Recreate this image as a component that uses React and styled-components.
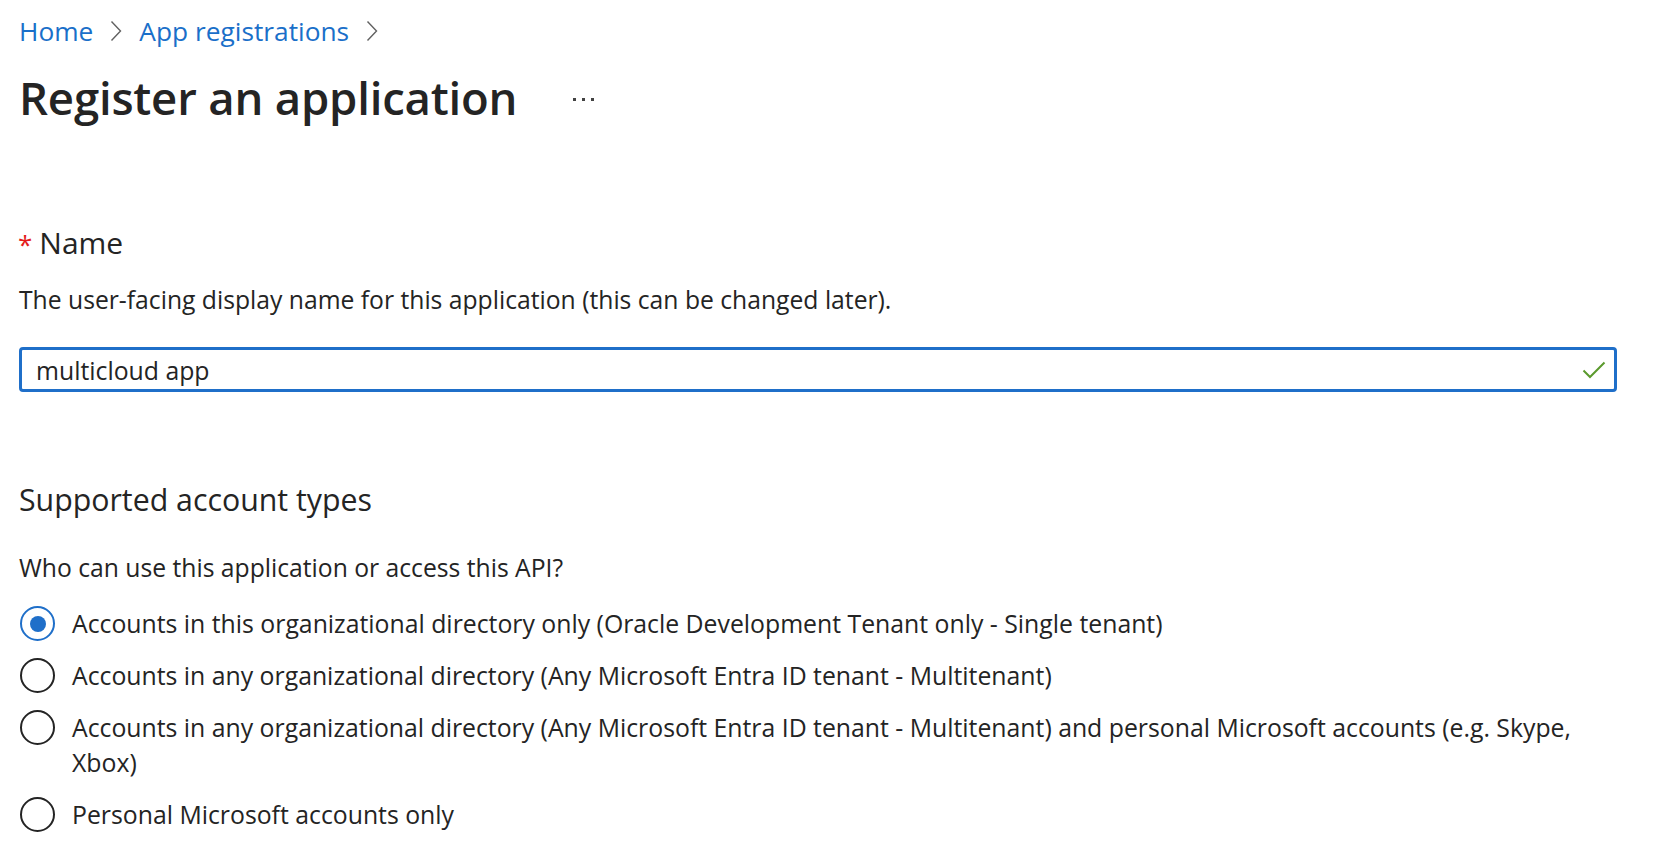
import React, { useState } from 'react';
import styled, { createGlobalStyle } from 'styled-components';

const GlobalStyle = createGlobalStyle`
  html, body {
    margin: 0;
    padding: 0;
    background: #ffffff;
  }
  body {
    font-family: "Open Sans", "Noto Sans", sans-serif;
    color: #242424;
  }
`;

const Page = styled.div`
  padding: 13px 45px 0 19px;
`;

const Breadcrumb = styled.nav`
  display: flex;
  align-items: center;
  height: 36px;
  font-size: 26.3px;
`;

const Crumb = styled.a`
  color: #1a6fc9;
  text-decoration: none;
  cursor: pointer;
`;

const Chevron = styled.span`
  display: inline-flex;
  width: 12px;
  margin: 0 17px 0 17px;
  color: #616161;
`;

const TitleRow = styled.div`
  display: flex;
  align-items: center;
  margin-top: 20px;
  height: 56px;
`;

const Title = styled.h1`
  margin: 0;
  font-size: 45.5px;
  font-weight: 600;
  color: #242424;
  letter-spacing: -0.2px;
`;

const More = styled.button`
  display: flex;
  gap: 6px;
  margin-left: 56px;
  margin-top: 4px;
  padding: 0;
  border: none;
  background: none;
  cursor: pointer;

  span {
    width: 3px;
    height: 3px;
    background: #424242;
  }
`;

const FieldLabel = styled.label`
  display: flex;
  align-items: center;
  margin-top: 97px;
  height: 40px;
  font-size: 30px;
  color: #242424;
`;

const Required = styled.span`
  color: #e41b1b;
  font-size: 26px;
  margin-right: 7px;
  margin-left: -1px;
  align-self: flex-start;
  margin-top: 4px;
`;

const Hint = styled.p`
  margin: 20px 0 0;
  line-height: 36px;
  font-size: 24.7px;
`;

const InputBox = styled.div`
  display: flex;
  align-items: center;
  margin-top: 29px;
  height: 45px;
  box-sizing: border-box;
  border: 3px solid #1f6fc9;
  border-radius: 4px;
  padding: 0 8px 0 14px;
`;

const TextInput = styled.input`
  flex: 1;
  border: none;
  outline: none;
  padding: 0;
  font-family: inherit;
  font-size: 24.8px;
  color: #242424;
  caret-color: #242424;
  background: transparent;
`;

const SectionTitle = styled.h2`
  margin: 88px 0 0;
  font-size: 30.3px;
  font-weight: 400;
  line-height: 40px;
  color: #242424;
`;

const Question = styled.p`
  margin: 30px 0 0;
  font-size: 24.7px;
  line-height: 36px;
`;

const Options = styled.div`
  display: flex;
  flex-direction: column;
  gap: 17px;
  margin-top: 20px;
`;

const Option = styled.label`
  display: flex;
  align-items: flex-start;
  gap: 17px;
  cursor: pointer;
  padding-left: 1px;
`;

const Radio = styled.span`
  flex: none;
  box-sizing: border-box;
  width: 35px;
  height: 35px;
  border-radius: 50%;
  border: 2px solid ${p => (p.$checked ? '#1f6fc9' : '#242424')};
  display: flex;
  align-items: center;
  justify-content: center;

  &::after {
    content: '';
    width: 16px;
    height: 16px;
    border-radius: 50%;
    background: ${p => (p.$checked ? '#1f6fc9' : 'transparent')};
  }
`;

const OptionText = styled.span`
  font-size: 24.8px;
  line-height: 35px;
  color: #242424;
`;

const ChevronIcon = () => (
  <svg width="12" height="22" viewBox="0 0 12 22" fill="none">
    <path d="M1.5 1.5 L10.5 11 L1.5 20.5" stroke="currentColor" strokeWidth="1.4" />
  </svg>
);

const CheckIcon = () => (
  <svg width="24" height="18" viewBox="0 0 24 18" fill="none">
    <path d="M1.5 9.5 L8 16 L22.5 1.5" stroke="#5b9a2d" strokeWidth="2" />
  </svg>
);

const accountTypes = [
  'Accounts in this organizational directory only (Oracle Development Tenant only - Single tenant)',
  'Accounts in any organizational directory (Any Microsoft Entra ID tenant - Multitenant)',
  'Accounts in any organizational directory (Any Microsoft Entra ID tenant - Multitenant) and personal Microsoft accounts (e.g. Skype, Xbox)',
  'Personal Microsoft accounts only',
];

export default function App() {
  const [name, setName] = useState('multicloud app');
  const [selected, setSelected] = useState(0);

  return (
    <>
      <GlobalStyle />
      <Page>
        <Breadcrumb>
          <Crumb>Home</Crumb>
          <Chevron><ChevronIcon /></Chevron>
          <Crumb>App registrations</Crumb>
          <Chevron><ChevronIcon /></Chevron>
        </Breadcrumb>

        <TitleRow>
          <Title>Register an application</Title>
          <More aria-label="More">
            <span /><span /><span />
          </More>
        </TitleRow>

        <FieldLabel>
          <Required>*</Required>
          Name
        </FieldLabel>
        <Hint>The user-facing display name for this application (this can be changed later).</Hint>
        <InputBox>
          <TextInput autoFocus value={name} onChange={e => setName(e.target.value)} />
          <CheckIcon />
        </InputBox>

        <SectionTitle>Supported account types</SectionTitle>
        <Question>Who can use this application or access this API?</Question>
        <Options>
          {accountTypes.map((label, i) => (
            <Option key={i} onClick={() => setSelected(i)}>
              <Radio $checked={selected === i} />
              <OptionText>{label}</OptionText>
            </Option>
          ))}
        </Options>
      </Page>
    </>
  );
}
